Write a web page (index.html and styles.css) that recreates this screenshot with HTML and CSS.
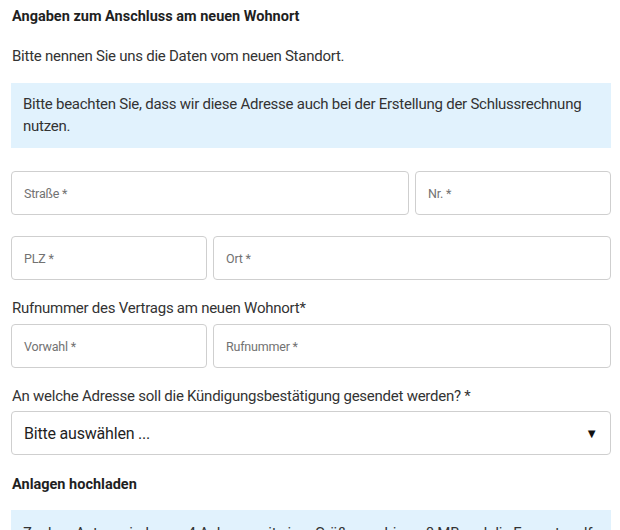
FILE: index.html
```html
<!DOCTYPE html>
<html lang="de">
<head>
<meta charset="utf-8">
<title>Angaben zum Anschluss</title>
<link rel="stylesheet" href="styles.css">
</head>
<body>
<main class="form">
  <h2 class="section-title">Angaben zum Anschluss am neuen Wohnort</h2>
  <p class="intro">Bitte nennen Sie uns die Daten vom neuen Standort.</p>
  <div class="notice">Bitte beachten Sie, dass wir diese Adresse auch bei der Erstellung der Schlussrechnung nutzen.</div>

  <div class="row row-wide-narrow">
    <div class="field"><span class="ph">Straße *</span></div>
    <div class="field"><span class="ph">Nr. *</span></div>
  </div>
  <div class="row row-narrow-wide">
    <div class="field"><span class="ph">PLZ *</span></div>
    <div class="field"><span class="ph">Ort *</span></div>
  </div>

  <p class="label">Rufnummer des Vertrags am neuen Wohnort*</p>
  <div class="row row-narrow-wide row-tight">
    <div class="field"><span class="ph">Vorwahl *</span></div>
    <div class="field"><span class="ph">Rufnummer *</span></div>
  </div>

  <p class="label">An welche Adresse soll die Kündigungsbestätigung gesendet werden? *</p>
  <div class="select">
    <span class="select-text">Bitte auswählen ...</span>
    <span class="select-arrow">▼</span>
  </div>

  <h2 class="section-title upload-title">Anlagen hochladen</h2>
  <div class="notice notice-bottom">Zu dem Antrag sind max. 4 Anlagen mit einer Größe von bis zu 8 MB und die Formate pdf, jpg zulässig.</div>
</main>
</body>
</html>
```

FILE: styles.css
```css
html, body {
  margin: 0;
  padding: 0;
  background: #ffffff;
  overflow: hidden;
}

body {
  font-family: Roboto, "Liberation Sans", Arial, sans-serif;
  color: #262626;
}

.form {
  width: 600px;
  padding: 6px 9px 0 11px;
}

.section-title {
  margin: 0;
  padding-left: 1px;
  font-size: 14.5px;
  line-height: 22px;
  font-weight: 700;
  color: #1f1f1f;
}

.intro {
  margin: 17px 0 0 1px;
  font-size: 15px;
  line-height: 22px;
  letter-spacing: -0.25px;
  color: #333;
}

.notice {
  margin-top: 16px;
  background: #e1f2fd;
  padding: 10px 12px 11px 12px;
  font-size: 15px;
  line-height: 22px;
  letter-spacing: -0.25px;
  color: #333;
}

.row {
  display: grid;
  gap: 6px;
  margin-top: 23px;
}

.row + .row {
  margin-top: 21px;
}

.row-wide-narrow {
  grid-template-columns: 398px 196px;
}

.row-narrow-wide {
  grid-template-columns: 196px 398px;
}

.row-tight,
.row + .row-tight {
  margin-top: 5px;
}

.field {
  box-sizing: border-box;
  height: 44px;
  border: 1px solid #cfcfcf;
  border-radius: 4px;
  display: flex;
  align-items: center;
  padding: 1px 0 0 12px;
}

.ph {
  font-size: 12.5px;
  letter-spacing: -0.2px;
  color: #727272;
}

.label {
  margin: 17px 0 0 1px;
  font-size: 15px;
  line-height: 22px;
  letter-spacing: -0.25px;
  color: #333;
}

.select {
  box-sizing: border-box;
  margin-top: 4px;
  height: 44px;
  border: 1px solid #cfcfcf;
  border-radius: 4px;
  display: flex;
  align-items: center;
  justify-content: space-between;
  padding: 0 12px 0 12px;
}

.select-text {
  font-size: 16px;
  letter-spacing: -0.2px;
  color: #1f1f1f;
}

.select-arrow {
  font-size: 13px;
  color: #111;
}

.upload-title {
  margin-top: 19px;
}

.notice-bottom {
  margin-top: 14px;
  padding-top: 12px;
}
```
